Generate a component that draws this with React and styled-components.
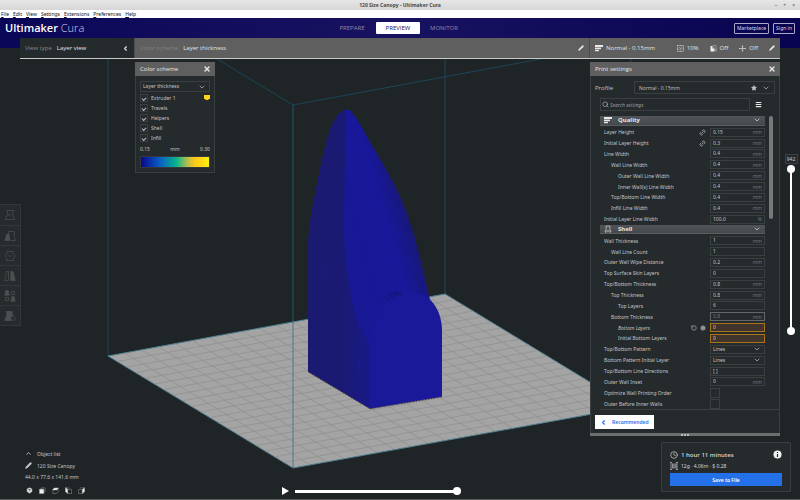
import React, { useState } from 'react';
import styled, { createGlobalStyle, css } from 'styled-components';
import {
  ChevronDown, ChevronLeft, ChevronUp, Clock, Info, Link2, Menu, Pencil, RotateCcw, Search, Star, X,
} from 'lucide-react';

const GlobalStyle = createGlobalStyle`
  :root {
    --bg: #1f2426;
    --panel: #252a2d;
    --field: #252a2d;
    --border: #3a3f42;
    --bar: #5f5f5f;
    --text: #c3c5c6;
    --muted: #74787a;
    --blue: #2470e8;
    --title-font: 'Open Sans', 'Noto Sans', sans-serif;
  }

  * {
    box-sizing: border-box;
  }

  body {
    margin: 0;
    background: var(--bg);
    color: var(--text);
    font-family: 'Noto Sans', 'Open Sans', sans-serif;
    font-size: 5px;
    line-height: 8px;
  }

  button, input, select {
    font: inherit;
    color: inherit;
    margin: 0;
    padding: 0;
    border: 0;
    background: none;
    min-width: 0;
  }

  button {
    cursor: pointer;
  }

  svg {
    display: block;
    flex-shrink: 0;
  }
`;

const Page = styled.div`
  display: flex;
  flex-direction: column;
  min-height: 100vh;
  border-bottom: 1px solid #5a5a5c;
`;

const TitleBar = styled.div`
  display: grid;
  grid-template-columns: 1fr auto 1fr;
  align-items: center;
  height: 10px;
  padding: 0 5px;
  background: linear-gradient(#e6e6e6, #d6d6d6);
  color: #4a4a4a;
  font-weight: 600;
`;

const WindowTitle = styled.h1`
  grid-column: 2;
  margin: 0;
  font-size: 5px;
  line-height: 8px;
  font-weight: 700;
`;

const WindowButtons = styled.div`
  display: flex;
  justify-content: flex-end;
  gap: 6px;
  line-height: 8px;
  color: #666;
`;

const MenuBar = styled.nav`
  display: flex;
  gap: 4px;
  height: 8px;
  padding-left: 1px;
  background: #fff;
`;

const MenuLink = styled.a`
  color: #111;
  text-decoration: none;
`;

const Header = styled.header`
  display: grid;
  grid-template-columns: 1fr auto 1fr;
  align-items: center;
  height: 30px;
  padding: 0 5px 10px;
  background: linear-gradient(90deg, #0b0758, #181260 50%, #080450);
`;

const Logo = styled.div`
  color: #d5d5e6;
  font-family: var(--title-font);
  font-size: 11px;
  line-height: 14px;
  font-weight: 300;

  strong {
    color: #fff;
    font-weight: 600;
  }
`;

const Stages = styled.div`
  display: flex;
  gap: 2px;
  margin-right: 4px;
`;

const StageTab = styled.button`
  width: 44px;
  height: 12px;
  font-family: var(--title-font);
  font-size: 6px;
  border-radius: 1px;
  color: ${props => (props.$active ? '#181260' : '#8d8aae')};
  background: ${props => (props.$active ? '#fff' : 'transparent')};
`;

const Account = styled.div`
  display: flex;
  justify-content: flex-end;
  gap: 4px;
`;

const OutlineButton = styled.button`
  height: 11px;
  padding: 0 2px;
  border: 1px solid #a9a7c8;
  border-radius: 1px;
  color: #dcdcec;
`;

const StageBar = styled.div`
  display: grid;
  grid-template-columns: 115px 1fr 190px;
  height: 21px;
  margin: -10px 20px 0;
  border-bottom: 1px solid #c9c9c9;
  position: relative;
  z-index: 1;
`;

const StageSection = styled.div`
  display: flex;
  align-items: center;
  gap: 5px;
  padding: 0 ${props => (props.$last ? '4px' : '5px')} 0 5px;
  font-family: var(--title-font);
  font-size: 6px;
  color: #e4e4e4;
  background: ${props => (props.$dark ? 'var(--panel)' : 'var(--bar)')};
  border-right: 1px solid ${props => (props.$last ? 'transparent' : '#4c4c4c')};
`;

const Caption = styled.span`
  color: ${props => (props.$faint ? '#7f8182' : '#85898b')};
`;

const Spacer = styled.div`
  flex: 1;
`;

const Summary = styled.span`
  display: flex;
  align-items: center;
  gap: 3px;
  margin-left: ${props => (props.$spaced ? '6px' : '0')};
`;

const IconButton = styled.button`
  display: flex;
  align-items: center;
  justify-content: center;
  color: #e8e8e8;
`;

const Workspace = styled.main`
  position: relative;
  flex: 1;
  display: flex;
  flex-direction: column;
`;

// The 3D view fills the whole workspace behind the floating panels
const Scene = styled.svg`
  position: absolute;
  inset: 0;
  width: 100%;
  height: 100%;
`;

const Upper = styled.div`
  position: relative;
  display: flex;
  align-items: flex-start;
  padding-top: 3px;
`;

const ToolRail = styled.div`
  display: flex;
  flex-direction: column;
  width: 21px;
  margin: 142px 114px 0 0;
  border: 1px solid #32373a;
  border-left: 0;
  background: #262b2e;
`;

const ToolButton = styled.button`
  display: flex;
  align-items: center;
  justify-content: center;
  height: 20px;
  color: #4c5052;

  & + & {
    border-top: 1px solid #32373a;
  }
`;

const Panel = styled.section`
  width: ${props => props.$width};
  background: var(--panel);
  border: 1px solid var(--border);
`;

const PanelHeader = styled.div`
  display: flex;
  align-items: center;
  justify-content: space-between;
  height: 14px;
  margin: -1px -1px 0;
  padding: 0 4px 0 5px;
  background: var(--bar);
  color: #e6e6e6;
  font-family: var(--title-font);
  font-size: 6px;
`;

const SchemeBody = styled.div`
  display: flex;
  flex-direction: column;
  padding: 5px 4px 4px;
`;

const SelectBox = styled.div`
  display: flex;
  align-items: center;
  position: relative;
  height: ${props => props.$height || '100%'};
  border: 1px solid var(--border);
  background: var(--field);

  select {
    appearance: none;
    width: 100%;
    height: 100%;
    padding-left: 2px;
    line-height: 7px;
  }

  svg {
    position: absolute;
    right: 3px;
    pointer-events: none;
  }
`;

const SchemeRow = styled.label`
  display: flex;
  align-items: center;
  gap: 3px;
  margin-top: 2px;
  height: 8px;
`;

const checkmark = css`
  &:checked::after {
    content: '';
    width: 3px;
    height: 2px;
    border-left: 1px solid #c0c2c3;
    border-bottom: 1px solid #c0c2c3;
    transform: rotate(-45deg);
  }
`;

const Check = styled.input`
  appearance: none;
  display: flex;
  align-items: center;
  justify-content: center;
  width: ${props => props.$size || '8px'};
  height: ${props => props.$size || '8px'};
  border: 1px solid var(--border);
  ${checkmark}
`;

const Swatch = styled.svg`
  margin-left: auto;
`;

const Scale = styled.div`
  display: flex;
  justify-content: space-between;
  margin-top: 3px;
`;

const GradientBar = styled.div`
  height: 12px;
  margin-top: 3px;
  border: 1px solid #34393c;
  background: linear-gradient(90deg, #08088c, #0a5fc4 28%, #08b48c 52%, #b4be4c 68%, #ffc814 80%, #fff014);
`;

const ProfileRow = styled.div`
  display: grid;
  grid-template-columns: 39px 1fr;
  align-items: center;
  margin: 5px 4px 4px;
  font-family: var(--title-font);
  font-size: 6px;
`;

const ProfileButton = styled.button`
  display: flex;
  align-items: center;
  gap: 5px;
  height: 13px;
  padding: 0 4px;
  border: 1px solid var(--border);
  font-size: 5px;
`;

const SearchRow = styled.div`
  display: flex;
  align-items: center;
  gap: 5px;
  margin: 0 17px 5px 9px;
`;

const SearchBox = styled.div`
  flex: 1;
  display: flex;
  align-items: center;
  gap: 1px;
  height: 13px;
  padding: 0 1px;
  border: 1px solid var(--border);

  input {
    flex: 1;
    font-style: italic;
    outline: 0;
  }

  input::placeholder {
    color: #9a9c9d;
    opacity: 1;
  }
`;

const ListArea = styled.div`
  display: flex;
  align-items: flex-start;
  gap: 4px;
  height: 294px;
  margin-left: 9px;
  overflow: hidden;
  border-bottom: 1px solid #3a3f42;
`;

const SettingsList = styled.div`
  display: grid;
  grid-auto-rows: minmax(0, 1fr);
  width: 165px;
  height: 293px;
`;

const ScrollThumb = styled.div`
  width: 4px;
  height: 103px;
  border-radius: 2px;
  background: #77797a;
`;

const Category = styled.button`
  display: flex;
  align-items: center;
  gap: 6px;
  margin-bottom: 1px;
  padding: 0 4px;
  background: linear-gradient(#515557, #46494b);
  border-bottom: 1px solid #5a5d5f;
  color: #e6e6e6;
  font-family: var(--title-font);
  font-size: 6px;
  font-weight: 700;
`;

const SettingRow = styled.div`
  display: grid;
  grid-template-columns: 1fr auto 55px;
  align-items: center;
  gap: 3px;
  padding-left: ${props => 4 + props.$level * 7}px;

  label {
    font-style: ${props => (props.$changed ? 'italic' : 'normal')};
  }
`;

const RowIcons = styled.span`
  display: flex;
  gap: 3px;
  color: #a0a3a4;
  padding-right: 1px;
`;

const Field = styled.div`
  display: flex;
  align-items: center;
  height: 9px;
  padding: 0 2px;
  border: 1px solid var(--border);
  background: var(--field);

  input {
    flex: 1;
    width: 20px;
    height: 7px;
    line-height: 7px;
    outline: 0;
  }

  ${props => props.$tone === 'warning' && css`
    border-color: #a8741c;
    background: #40342c;
  `}

  ${props => props.$tone === 'disabled' && css`
    border-color: #62686b;
    color: var(--muted);
  `}
`;

const Unit = styled.span`
  color: var(--muted);
`;

const PanelFooter = styled.div`
  padding: 5px 4px 4px;
`;

const RecommendedButton = styled.button`
  display: flex;
  align-items: center;
  gap: 5px;
  height: 14px;
  padding: 0 5px;
  background: #fff;
  color: var(--blue);
  font-weight: 600;
`;

const ResizeHandle = styled.div`
  display: flex;
  align-items: center;
  justify-content: center;
  gap: 1px;
  height: 3px;
  margin: 0 -1px -1px;
  background: #6c6f70;

  i {
    width: 2px;
    height: 2px;
    border-radius: 1px;
    background: #d0d0d0;
  }
`;

const LayerSlider = styled.div`
  display: flex;
  flex-direction: column;
  align-items: center;
  width: 18px;
  gap: 1px;
  margin: 92px 0 0 2px;
`;

const LayerInput = styled.input`
  width: 13px;
  height: 10px;
  border: 1px solid var(--border);
  background: var(--panel);
  text-align: center;
`;

const thumb = css`
  appearance: none;
  width: 8px;
  height: 8px;
  border-radius: 50%;
  background: #fff;
  pointer-events: auto;
`;

const RangeTrack = styled.div`
  position: relative;
  width: 8px;
  height: 170px;
  background: linear-gradient(#fff, #fff) center / 2px calc(100% - 8px) no-repeat;

  input {
    position: absolute;
    inset: 0;
    width: 8px;
    height: 100%;
    appearance: none;
    writing-mode: vertical-lr;
    direction: rtl;
    pointer-events: none;
  }

  input::-webkit-slider-thumb {
    ${thumb}
  }
`;

const Lower = styled.div`
  position: relative;
  display: grid;
  grid-template-columns: 257px 1fr 130px;
  align-items: end;
  margin-top: auto;
  padding: 6px 9px 7px 25px;
`;

const ObjectInfo = styled.div`
  display: flex;
  flex-direction: column;
  align-items: flex-start;
  gap: 3px;
  margin-bottom: -2px;
`;

const ObjectLine = styled.button`
  display: flex;
  align-items: center;
  gap: 5px;
  height: 9px;
`;

const ViewButtons = styled.div`
  display: flex;
  gap: 6px;
  margin: 3px 0 0 1px;
`;

const Player = styled.div`
  display: flex;
  align-items: center;
  gap: 5px;
  width: 179px;
  margin-bottom: -3px;

  input {
    flex: 1;
    height: 8px;
    appearance: none;
    background: linear-gradient(#fff, #fff) center / calc(100% - 2px) 3px no-repeat;
  }

  input::-webkit-slider-thumb {
    ${thumb}
  }
`;

const ActionPanel = styled.section`
  display: flex;
  flex-direction: column;
  height: 50px;
  padding: 7px 8px 5px;
  background: var(--panel);
  border: 1px solid var(--border);
  border-radius: 1px;
`;

const Estimate = styled.div`
  display: flex;
  align-items: center;
  gap: 3px;
  height: 9px;
  margin-bottom: 2px;
  color: #d6d7d8;
  font-family: ${props => (props.$big ? 'var(--title-font)' : 'inherit')};
  font-size: ${props => (props.$big ? '6px' : '5px')};
  font-weight: ${props => (props.$big ? 600 : 400)};
`;

const SaveButton = styled.button`
  height: 13px;
  margin-top: auto;
  background: var(--blue);
  color: #fff;
  font-weight: 600;
`;

const QUALITY = [
  { name: 'Layer Height', value: '0.15', unit: 'mm', linked: true },
  { name: 'Initial Layer Height', value: '0.3', unit: 'mm', linked: true },
  { name: 'Line Width', value: '0.4', unit: 'mm' },
  { name: 'Wall Line Width', value: '0.4', unit: 'mm', level: 1 },
  { name: 'Outer Wall Line Width', value: '0.4', unit: 'mm', level: 2 },
  { name: 'Inner Wall(s) Line Width', value: '0.4', unit: 'mm', level: 2 },
  { name: 'Top/Bottom Line Width', value: '0.4', unit: 'mm', level: 1 },
  { name: 'Infill Line Width', value: '0.4', unit: 'mm', level: 1 },
  { name: 'Initial Layer Line Width', value: '100.0', unit: '%' },
];

const SHELL = [
  { name: 'Wall Thickness', value: '1', unit: 'mm' },
  { name: 'Wall Line Count', value: '1', level: 1 },
  { name: 'Outer Wall Wipe Distance', value: '0.2', unit: 'mm' },
  { name: 'Top Surface Skin Layers', value: '0' },
  { name: 'Top/Bottom Thickness', value: '0.8', unit: 'mm' },
  { name: 'Top Thickness', value: '0.8', unit: 'mm', level: 1 },
  { name: 'Top Layers', value: '6', level: 2 },
  { name: 'Bottom Thickness', value: '0.8', unit: 'mm', level: 1, tone: 'disabled' },
  { name: 'Bottom Layers', value: '0', level: 2, tone: 'warning', changed: true },
  { name: 'Initial Bottom Layers', value: '0', level: 2, tone: 'warning' },
  { name: 'Top/Bottom Pattern', value: 'Lines', type: 'select' },
  { name: 'Bottom Pattern Initial Layer', value: 'Lines', type: 'select' },
  { name: 'Top/Bottom Line Directions', value: '[ ]' },
  { name: 'Outer Wall Inset', value: '0', unit: 'mm' },
  { name: 'Optimize Wall Printing Order', type: 'check' },
  { name: 'Outer Before Inner Walls', type: 'check' },
];

const MENU = ['File', 'Edit', 'View', 'Settings', 'Extensions', 'Preferences', 'Help'];

const QualityIcon = () => (
  <svg width="8" height="7" viewBox="0 0 8 7" fill="#e8e8e8">
    <rect width="8" height="2" />
    <rect y="2.6" width="6" height="1.6" />
    <rect y="4.8" width="4" height="1.4" />
  </svg>
);

const ShellIcon = () => (
  <svg width="8" height="8" viewBox="0 0 16 16" fill="none" stroke="#c8c8c8" strokeWidth="1.4">
    <path d="M4 2h8v3h-1l3 9h-4v-3H6v3H2l3-9H4z" />
  </svg>
);

const InfillIcon = () => (
  <svg width="7" height="7" viewBox="0 0 14 14" fill="none" stroke="#d8d8d8">
    <rect x="1" y="1" width="12" height="12" />
    <path d="M4 4l6 6M10 4l-6 6M1 7h2M11 7h2M7 1v2M7 11v2" />
  </svg>
);

const SupportIcon = () => (
  <svg width="7" height="7" viewBox="0 0 14 14">
    <path d="M1 2h4v5h4v6H1z" fill="#f0f0f0" />
    <path d="M6 1h6l1 11h-3V6H6z" fill="none" stroke="#bcbcbc" />
  </svg>
);

const AdhesionIcon = () => (
  <svg width="7" height="7" viewBox="0 0 14 14" stroke="#d8d8d8" fill="#d8d8d8">
    <path d="M0 7h14" strokeWidth="1.6" />
    <path d="M7 0v4M7 10v4" />
    <path d="M5 3h4L7 6zM5 11h4L7 8z" stroke="none" />
  </svg>
);

const SpoolIcon = () => (
  <svg width="8" height="8" viewBox="0 0 16 16" stroke="#c4c6c7" fill="none" strokeWidth="1.3">
    <path d="M2 1v14M14 1v14M5 3v10M7.5 3v10M10 3v10M12 3v10M0 1h4M12 1h4M0 15h4M12 15h4" />
  </svg>
);

const InfoIcon = () => (
  <svg width="9" height="9" viewBox="0 0 18 18">
    <circle cx="9" cy="9" r="8" fill="#f4f4f4" />
    <path d="M9 4v2M9 8v6" stroke="#252a2d" strokeWidth="2.4" />
  </svg>
);

const TOOL_SHAPES = {
  Move: <><path d="M4 2h9l-2 3 3 9H2l3-8zM5 8h5" /></>,
  Scale: <><path d="M6 6V2h8v3h-1l2 9H9" /><path d="M3 6h4v3l1 5H1l2-5z" fill="currentColor" /></>,
  Rotate: <><path d="M4 2h8v3l3 3-3 3 1 3H3l1-3-3-3 3-3zM5 8h5" /></>,
  Mirror: <><path d="M3 2h3v12H1l2-8z" /><path d="M9 2h3l3 12H9z" fill="currentColor" /></>,
  'Per model settings': (
    <>
      <path d="M2 1h4v2l1 4H1l1-4zM10 9h4v2l1 4H9l1-4z" fill="currentColor" />
      <path d="M10 2h4v4h-4zM2 10h4v4H2z" />
    </>
  ),
  'Support blocker': <><path d="M3 2h8v3l1 3-3 6H1l3-8z" fill="currentColor" /><circle cx="12" cy="11" r="3" fill="#262b2e" /></>,
};

const VIEW_FACES = {
  '3D view': <path d="M8 1l6 3v7l-6 4-6-4V4zM5 5l3 2 3-2M8 7v4" fill="#e0e0e0" stroke="#55595b" />,
  'Front view': <><path d="M5 5V2h9v9h-3" /><path d="M1 5h10v10H1z" fill="#f0f0f0" /></>,
  'Top view': <><path d="M2 7v8h8l4-4V4" /><path d="M5 2h10l-4 5H1z" fill="#f0f0f0" /></>,
  'Left view': <><path d="M2 2h8M6 5h9v10H6z" /><path d="M1 1l5 4v10l-5-4z" fill="#f0f0f0" /></>,
  'Right view': <><path d="M1 6h9v9H1zM4 2h10" /><path d="M10 6l5-5v10l-5 4z" fill="#f0f0f0" /></>,
};

// Corners of the build plate in scene coordinates
const LEFT = [108, 356];
const FRONT = [293, 468];
const BACK = [445, 294];
const RIGHT = [631, 407];
const CELLS = 20;

const mix = (a, b, t) => [a[0] + (b[0] - a[0]) * t, a[1] + (b[1] - a[1]) * t];

function BuildPlate() {
  const lines = [];
  for (let i = 1; i < CELLS; i++) {
    const t = i / CELLS;
    lines.push([mix(LEFT, BACK, t), mix(FRONT, RIGHT, t)]);
    lines.push([mix(LEFT, FRONT, t), mix(BACK, RIGHT, t)]);
  }
  return (
    <g>
      <polygon points={[LEFT, FRONT, RIGHT, BACK].join(' ')} fill="#a4a4a4" stroke="#4e7f90" />
      <path
        d={lines.map(([a, b]) => `M${a}L${b}`).join('')}
        stroke="#8e8e8e"
        strokeWidth="0.7"
        fill="none"
      />
    </g>
  );
}

function Viewport() {
  return (
    <Scene viewBox="0 59 800 440" preserveAspectRatio="xMidYMid slice" aria-label="Layer preview">
      <defs>
        <linearGradient id="side" x1="345" x2="430" y1="250" y2="225" gradientUnits="userSpaceOnUse">
          <stop offset="0" stopColor="#191996" />
          <stop offset="0.55" stopColor="#18189a" />
          <stop offset="1" stopColor="#17175c" />
        </linearGradient>
        <linearGradient id="flank" x1="308" x2="372" y1="0" y2="0" gradientUnits="userSpaceOnUse">
          <stop offset="0" stopColor="#1a1a70" />
          <stop offset="0.55" stopColor="#1a1a74" />
          <stop offset="1" stopColor="#191988" />
        </linearGradient>
      </defs>
      <path d="M108 59V356M445 59V294M217 59L293 105L541 59M631 59V407" stroke="#1c4659" fill="none" />
      <BuildPlate />
      <path
        d="M343 111Q347 108 351 111C362 125 367 137 373 147C382 162 391 177 397 190C402 201 407 212 410 223C415 236 417 246 420 257L430 300L442 397L370 409L308 372V247C309 232 310 222 312 210L320 170C323 155 326 142 330 130C334 119 338 113 343 111Z"
        fill="url(#side)"
      />
      <path
        d="M346 110L343 111C338 113 334 119 330 130C326 142 323 155 320 170L312 210C310 222 309 232 308 247V372L370 409V345C353 322 344 275 344 220Z"
        fill="url(#flank)"
      />
      <path
        d="M370 409V340C372 317 387 292 413 292C430 293 442 310 442 331V397Z"
        fill="#19199a"
      />
      <path d="M383 299q8-8 20-6M386 302q6-8 16-7M391 295l7-4" stroke="#141468" strokeWidth="0.7" fill="none" />
      <path d="M322 268v8M358 361l1 6l-1 3" stroke="#1f1fb0" strokeWidth="0.7" fill="none" />
      <path d="M308 372L370 409L442 397" stroke="#9b9a3a" strokeWidth="0.7" strokeDasharray="2 1" fill="none" />
      <path d="M293 105V468" stroke="#2b6b83" strokeOpacity="0.6" fill="none" strokeWidth="1.2" />
    </Scene>
  );
}

function SettingControl({ id, setting }) {
  if (setting.type === 'check') {
    return <Check id={id} type="checkbox" $size="10px" />;
  }
  if (setting.type === 'select') {
    return (
      <SelectBox $height="9px">
        <select id={id} defaultValue={setting.value}>
          <option>{setting.value}</option>
        </select>
        <ChevronDown size={8} />
      </SelectBox>
    );
  }
  return (
    <Field $tone={setting.tone}>
      <input id={id} defaultValue={setting.value} disabled={setting.tone === 'disabled'} />
      <Unit>{setting.unit}</Unit>
    </Field>
  );
}

function SettingGroup({ title, icon, settings }) {
  return (
    <>
      <Category>
        {icon}
        {title}
        <Spacer />
        <ChevronDown size={8} />
      </Category>
      {settings.map((setting) => {
        const id = setting.name.toLowerCase().replace(/[^a-z]+/g, '-');
        return (
          <SettingRow key={id} $level={setting.level || 0} $changed={setting.changed}>
            <label htmlFor={id}>{setting.name}</label>
            <RowIcons>
              {setting.linked && <Link2 size={7} strokeWidth={3} transform="rotate(-45)" />}
              {setting.changed && <RotateCcw size={6} strokeWidth={3} />}
              {setting.changed && <Info size={6} fill="#a0a3a4" stroke="#44484a" />}
            </RowIcons>
            <SettingControl id={id} setting={setting} />
          </SettingRow>
        );
      })}
    </>
  );
}

function ColorScheme() {
  return (
    <Panel $width="80px">
      <PanelHeader>
        Color scheme
        <IconButton aria-label="Close color scheme"><X size={8} strokeWidth={4} /></IconButton>
      </PanelHeader>
      <SchemeBody>
        <SelectBox $height="11px">
          <select aria-label="Color scheme" defaultValue="Layer thickness">
            <option>Layer thickness</option>
          </select>
          <ChevronDown size={8} />
        </SelectBox>
        {['Extruder 1', 'Travels', 'Helpers', 'Shell', 'Infill'].map((name, index) => (
          <SchemeRow key={name}>
            <Check type="checkbox" defaultChecked />
            {name}
            {index === 0 && (
              <Swatch width="6" height="6" viewBox="0 0 6 6">
                <path d="M0 0h6v4H5L4 5H2L1 4H0z" fill="#ffd21c" />
              </Swatch>
            )}
          </SchemeRow>
        ))}
        <Scale>
          <span>0.15</span>
          <span>mm</span>
          <span>0.30</span>
        </Scale>
        <GradientBar />
      </SchemeBody>
    </Panel>
  );
}

function PrintSettings() {
  return (
    <Panel $width="190px">
      <PanelHeader>
        Print settings
        <IconButton aria-label="Close print settings"><X size={8} strokeWidth={4} /></IconButton>
      </PanelHeader>
      <ProfileRow>
        <span id="profile-label">Profile</span>
        <ProfileButton aria-labelledby="profile-label">
          Normal - 0.15mm
          <Spacer />
          <Star size={6} fill="currentColor" />
          <ChevronDown size={8} />
        </ProfileButton>
      </ProfileRow>
      <SearchRow>
        <SearchBox>
          <Search size={7} />
          <input aria-label="Search settings" placeholder="Search settings" />
        </SearchBox>
        <IconButton aria-label="Setting visibility"><Menu size={7} strokeWidth={4} /></IconButton>
      </SearchRow>
      <ListArea>
        <SettingsList>
          <SettingGroup title="Quality" icon={<QualityIcon />} settings={QUALITY} />
          <SettingGroup title="Shell" icon={<ShellIcon />} settings={SHELL} />
        </SettingsList>
        <ScrollThumb />
      </ListArea>
      <PanelFooter>
        <RecommendedButton>
          <ChevronLeft size={7} strokeWidth={4} />
          Recommended
        </RecommendedButton>
      </PanelFooter>
      <ResizeHandle><i /><i /><i /></ResizeHandle>
    </Panel>
  );
}

function App() {
  const [stage, setStage] = useState('PREVIEW');

  return (
    <Page>
      <GlobalStyle />
      <TitleBar>
        <WindowTitle>120 Size Canopy - Ultimaker Cura</WindowTitle>
        <WindowButtons>
          <span>–</span>
          <span>+</span>
          <span>×</span>
        </WindowButtons>
      </TitleBar>
      <MenuBar>
        {MENU.map((item) => (
          <MenuLink key={item} href="#"><u>{item[0]}</u>{item.slice(1)}</MenuLink>
        ))}
      </MenuBar>
      <Header>
        <Logo><strong>Ultimaker</strong> Cura</Logo>
        <Stages>
          {['PREPARE', 'PREVIEW', 'MONITOR'].map((name) => (
            <StageTab key={name} $active={name === stage} onClick={() => setStage(name)}>
              {name}
            </StageTab>
          ))}
        </Stages>
        <Account>
          <OutlineButton>Marketplace</OutlineButton>
          <OutlineButton>Sign in</OutlineButton>
        </Account>
      </Header>
      <StageBar>
        <StageSection $dark>
          <Caption>View type</Caption>
          Layer view
          <Spacer />
          <ChevronLeft size={7} strokeWidth={4} />
        </StageSection>
        <StageSection>
          <Caption $faint>Color scheme</Caption>
          Layer thickness
          <Spacer />
          <Pencil size={6} fill="currentColor" />
        </StageSection>
        <StageSection $last>
          <Summary><QualityIcon />Normal - 0.15mm</Summary>
          <Spacer />
          <Summary><InfillIcon />10%</Summary>
          <Summary $spaced><SupportIcon />Off</Summary>
          <Summary $spaced><AdhesionIcon />Off</Summary>
          <Summary $spaced><Pencil size={6} fill="currentColor" /></Summary>
        </StageSection>
      </StageBar>
      <Workspace>
        <Viewport />
        <Upper>
          <ToolRail>
            {Object.entries(TOOL_SHAPES).map(([name, shape]) => (
              <ToolButton key={name} aria-label={name}>
                <svg width="12" height="12" viewBox="0 0 16 16" fill="none" stroke="currentColor">{shape}</svg>
              </ToolButton>
            ))}
          </ToolRail>
          <ColorScheme />
          <Spacer />
          <PrintSettings />
          <LayerSlider>
            <LayerInput aria-label="Layer" defaultValue="942" />
            <RangeTrack>
              <input type="range" aria-label="Top layer" min="0" max="942" defaultValue="942" />
              <input type="range" aria-label="Bottom layer" min="0" max="942" defaultValue="0" />
            </RangeTrack>
          </LayerSlider>
        </Upper>
        <Lower>
          <ObjectInfo>
            <ObjectLine><ChevronUp size={7} strokeWidth={3} />Object list</ObjectLine>
            <ObjectLine><Pencil size={7} fill="currentColor" />120 Size Canopy</ObjectLine>
            <span>44.0 x 77.6 x 141.6 mm</span>
            <ViewButtons>
              {Object.entries(VIEW_FACES).map(([name, shape]) => (
                <IconButton key={name} aria-label={name}>
                  <svg width="7" height="7" viewBox="0 0 16 16" fill="none" stroke="#a8abac">{shape}</svg>
                </IconButton>
              ))}
            </ViewButtons>
          </ObjectInfo>
          <Player>
            <IconButton aria-label="Play">
              <svg width="7" height="8" viewBox="0 0 7 8"><path d="M0 0l7 4l-7 4z" fill="#fff" /></svg>
            </IconButton>
            <input type="range" aria-label="Path position" min="0" max="100" defaultValue="100" />
          </Player>
          <ActionPanel>
            <Estimate $big>
              <Clock size={8} />
              1 hour 11 minutes
              <Spacer />
              <InfoIcon />
            </Estimate>
            <Estimate>
              <SpoolIcon />
              12g · 4.06m · $ 0.28
            </Estimate>
            <SaveButton>Save to File</SaveButton>
          </ActionPanel>
        </Lower>
      </Workspace>
    </Page>
  );
}

export default App;
